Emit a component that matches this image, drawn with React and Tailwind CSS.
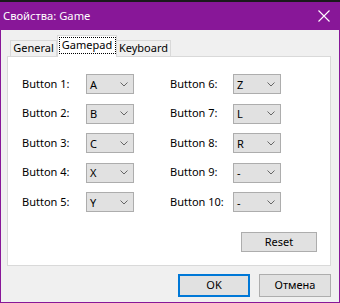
const left = [
  ["Button 1:", "A"],
  ["Button 2:", "B"],
  ["Button 3:", "C"],
  ["Button 4:", "X"],
  ["Button 5:", "Y"],
];
const right = [
  ["Button 6:", "Z"],
  ["Button 7:", "L"],
  ["Button 8:", "R"],
  ["Button 9:", "-"],
  ["Button 10:", "-"],
];

const Combo = ({ value }) => (
  <div className="w-[48px] h-[20px] bg-[#e1e1e1] border border-[#adadad] flex items-center justify-between pl-[3px] pr-[5px]">
    <span className="leading-none">{value}</span>
    <svg width="8" height="5" viewBox="0 0 8 5">
      <path d="M0.5 0.5 L4 4 L7.5 0.5" fill="none" stroke="#666" strokeWidth="1" />
    </svg>
  </div>
);

const Column = ({ rows, labelW }) => (
  <div className="flex flex-col gap-[9.5px]">
    {rows.map(([label, value]) => (
      <div key={label} className="flex items-center h-[20px]">
        <span className={labelW}>{label}</span>
        <Combo value={value} />
      </div>
    ))}
  </div>
);

const App = () => {
  return (
    <div className="w-[340px] h-[303px] bg-[#881798] flex flex-col text-[11px] text-black font-['Segoe_UI','Noto_Sans',sans-serif]">
      <div className="h-[30px] flex items-center justify-between pl-[3px] pr-[10px] border-t-2 border-[#1a1a1a] text-white text-[11.2px]">
        <span>Свойства: Game</span>
        <svg width="12" height="12" viewBox="0 0 12 12">
          <path d="M0.5 0.5 L11.5 11.5 M11.5 0.5 L0.5 11.5" stroke="#fff" strokeWidth="1.1" />
        </svg>
      </div>
      <div className="flex-1 mx-px mb-px bg-[#f0f0f0] pl-[6px] pr-[8px] pt-[5px] flex flex-col">
        <div className="flex items-end h-[21px] pl-[3px] relative z-10">
          <div className="w-[47px] h-[16px] border border-b-0 border-[#d9d9d9] bg-[#f0f0f0] flex items-center justify-center">General</div>
          <div className="w-[60px] h-[22px] -mb-px border border-b-0 border-[#d9d9d9] bg-white flex justify-center pt-px">
            <span className="w-[57px] h-[17px] border border-dotted border-black flex items-center justify-center">Gamepad</span>
          </div>
          <div className="w-[54px] h-[16px] border border-b-0 border-l-0 border-[#d9d9d9] bg-[#f0f0f0] flex items-center justify-center">Keyboard</div>
        </div>
        <div className="h-[210px] bg-white border border-[#d9d9d9] pl-[14px] pr-[13px] pt-[17px] flex flex-col">
          <div className="flex">
            <Column rows={left} labelW="w-[64px]" />
            <div className="w-[36px]" />
            <Column rows={right} labelW="w-[63px]" />
          </div>
          <div className="flex justify-end mt-[20px]">
            <div className="w-[76px] h-[20px] bg-[#e1e1e1] border border-[#adadad] flex items-center justify-center">Reset</div>
          </div>
        </div>
        <div className="flex justify-end gap-[9px] mt-[8px]">
          <div className="w-[72px] h-[23px] bg-[#e1e1e1] border-2 border-[#0078d7] flex items-center justify-center">OK</div>
          <div className="w-[72px] h-[23px] bg-[#e1e1e1] border border-[#adadad] flex items-center justify-center">Отмена</div>
        </div>
      </div>
    </div>
  );
};

export default App;
